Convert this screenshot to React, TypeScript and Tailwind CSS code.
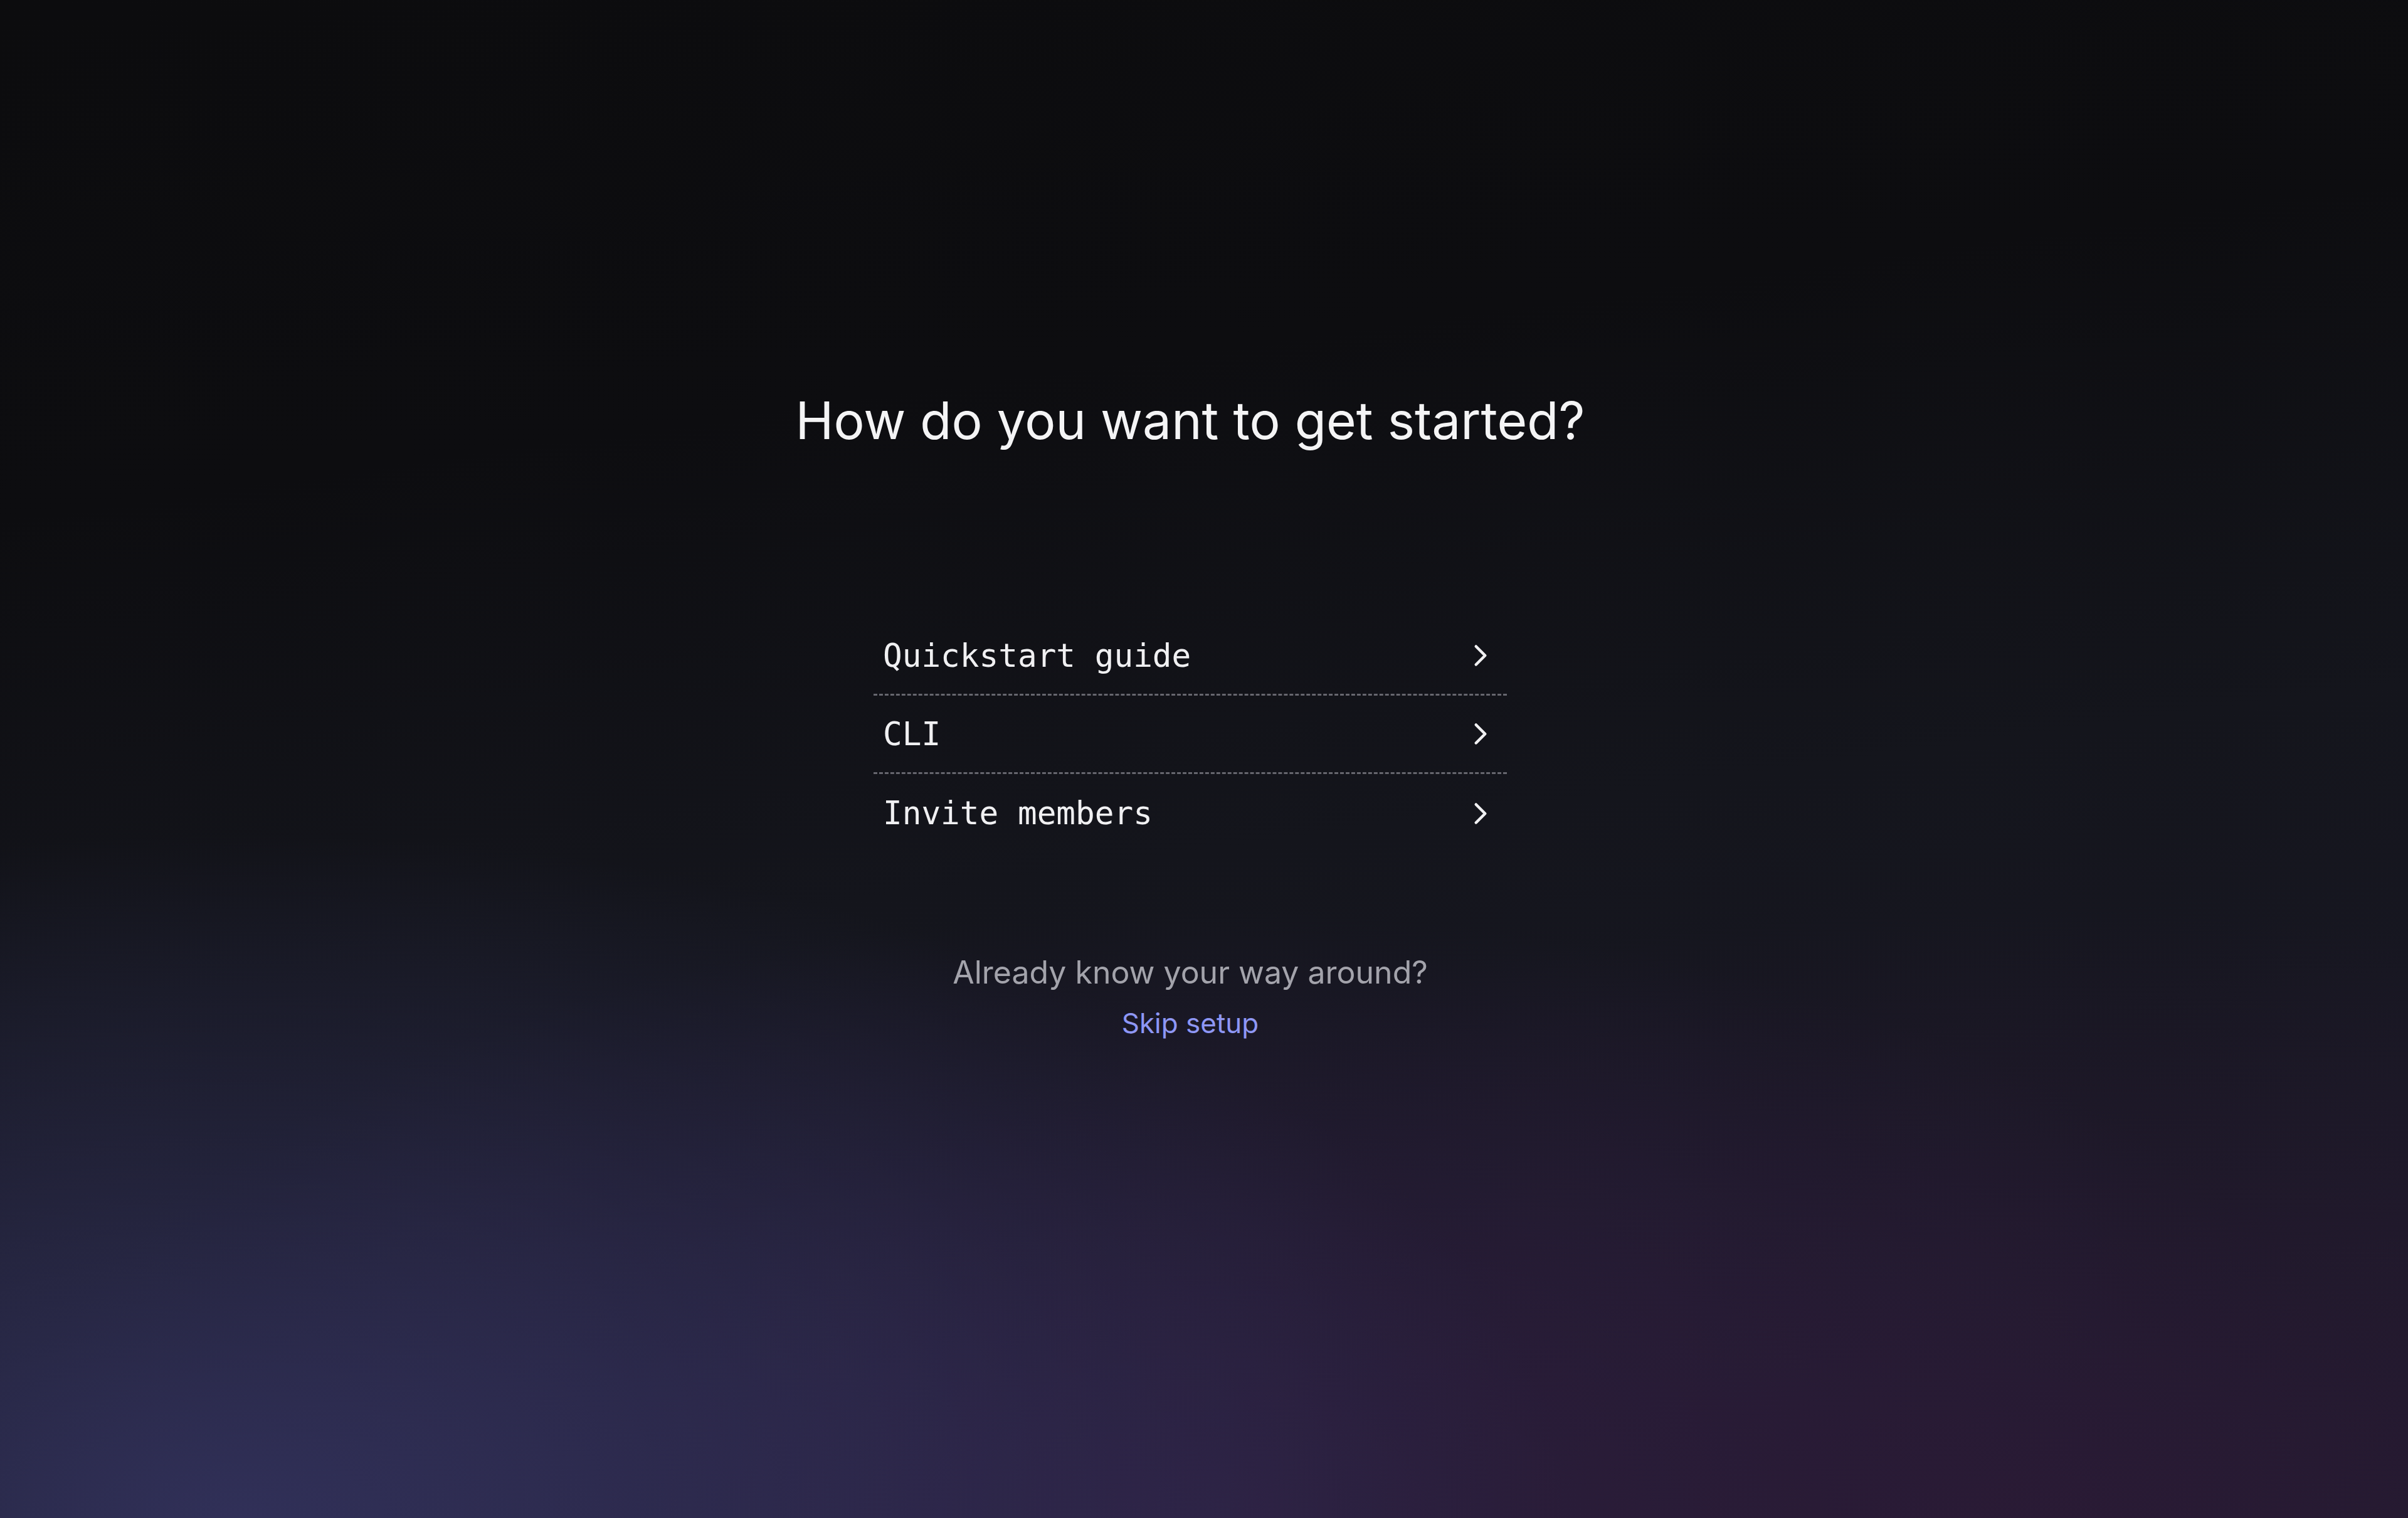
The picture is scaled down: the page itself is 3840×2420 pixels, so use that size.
import React from "react";
import { ChevronRight } from "lucide-react";

const items = ["Quickstart guide", "CLI", "Invite members"];

export default function App() {
  return (
    <div className="min-h-[2420px] w-full flex flex-col items-center pr-[44px] pt-[622px] [background-image:radial-gradient(ellipse_55%_45%_at_10%_100%,rgba(52,52,96,0.85)_0%,rgba(52,52,96,0)_100%),radial-gradient(ellipse_60%_40%_at_85%_100%,rgba(44,26,54,0.8)_0%,rgba(44,26,54,0)_100%),radial-gradient(ellipse_50%_40%_at_50%_100%,rgba(50,36,78,0.7)_0%,rgba(50,36,78,0)_100%),linear-gradient(172deg,#0c0c0e_0%,#0d0d10_28%,#14151c_55%,#1c1a2a_100%)]">
      <h1 className="text-[82px] leading-[98px] text-[#f4f4f5] font-normal [font-family:Inter,'Noto_Sans',sans-serif]">
        How do you want to get started?
      </h1>
      <div className="mt-[264px] w-[1010px] flex flex-col">
        {items.map((label, i) => (
          <div
            key={label}
            className={
              i < items.length - 1
                ? "h-[125px] flex items-center justify-between pl-[15px] pr-[13px] border-b-[3px] border-dashed border-[#66666e]"
                : "h-[125px] flex items-center justify-between pl-[15px] pr-[13px]"
            }
          >
            <span className="text-[51px] leading-[75px] text-[#f0f0f2] [font-family:'DejaVu_Sans_Mono','Liberation_Mono',monospace]">
              {label}
            </span>
            <ChevronRight size={58} strokeWidth={1.9} color="#f0f0f2" />
          </div>
        ))}
      </div>
      <p className="mt-[156px] text-[50px] leading-[70px] text-[#a3a3ab] [font-family:Inter,'Noto_Sans',sans-serif]">
        Already know your way around?
      </p>
      <a className="mt-[14px] text-[44px] leading-[64px] text-[#8e97f5] [font-family:Inter,'Noto_Sans',sans-serif] cursor-pointer">
        Skip setup
      </a>
    </div>
  );
}
